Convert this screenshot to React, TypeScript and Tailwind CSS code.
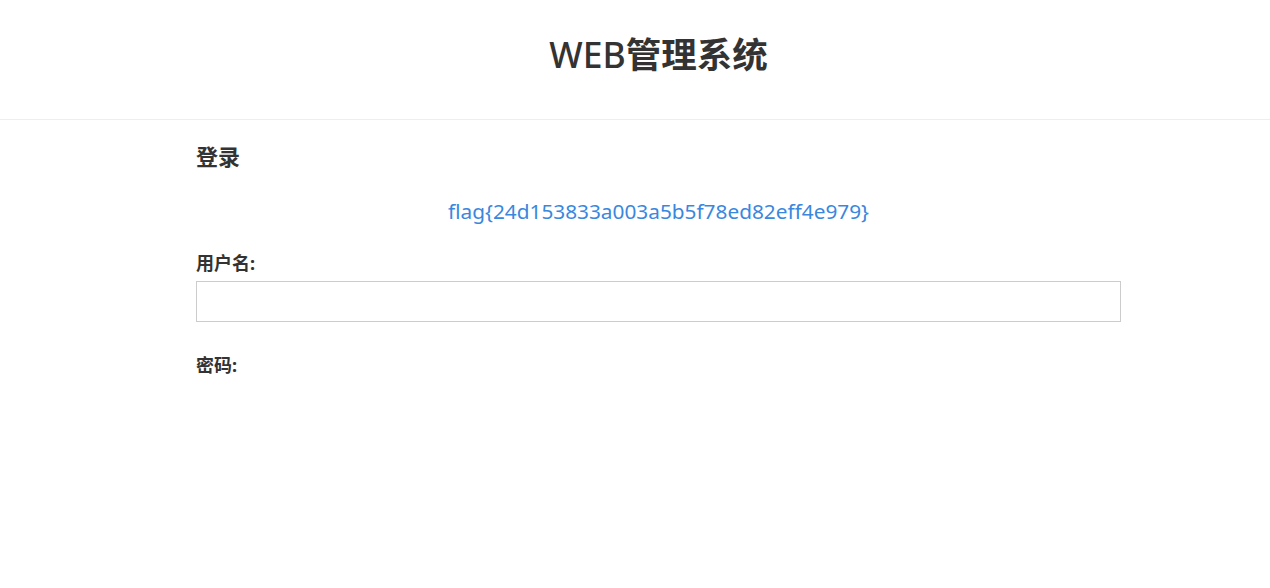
import React from 'react';

const font = { fontFamily: '"Noto Sans", "Noto Sans CJK SC", sans-serif' };

const App: React.FC = () => {
  return (
    <div className="min-h-[588px] bg-white text-[#333]" style={font}>
      <header className="h-[120px] border-b border-[#eee]">
        <div className="ml-[196px] w-[925px] pt-[28px] text-center">
          <h1 className="text-[35.5px] leading-[52px]">
            <span className="font-medium">WEB</span>
            <span className="font-bold">管理系统</span>
          </h1>
        </div>
      </header>
      <main className="ml-[196px] w-[925px]">
        <h2 className="mt-[21px] text-[22px] leading-[30px] font-bold">登录</h2>
        <p className="mt-[25px] text-center text-[20.8px] leading-[30px] text-[#3a87de]">
          flag{'{'}24d153833a003a5b5f78ed82eff4e979{'}'}
        </p>
        <form className="mt-[24px]">
          <label className="block text-[18px] leading-[26px] font-bold">用户名:</label>
          <input
            type="text"
            className="mt-[5px] block h-[41px] w-full border border-[#ccc] px-3 outline-none"
          />
          <label className="mt-[30px] block text-[18px] leading-[26px] font-bold">密码:</label>
        </form>
      </main>
    </div>
  );
};

export default App;
